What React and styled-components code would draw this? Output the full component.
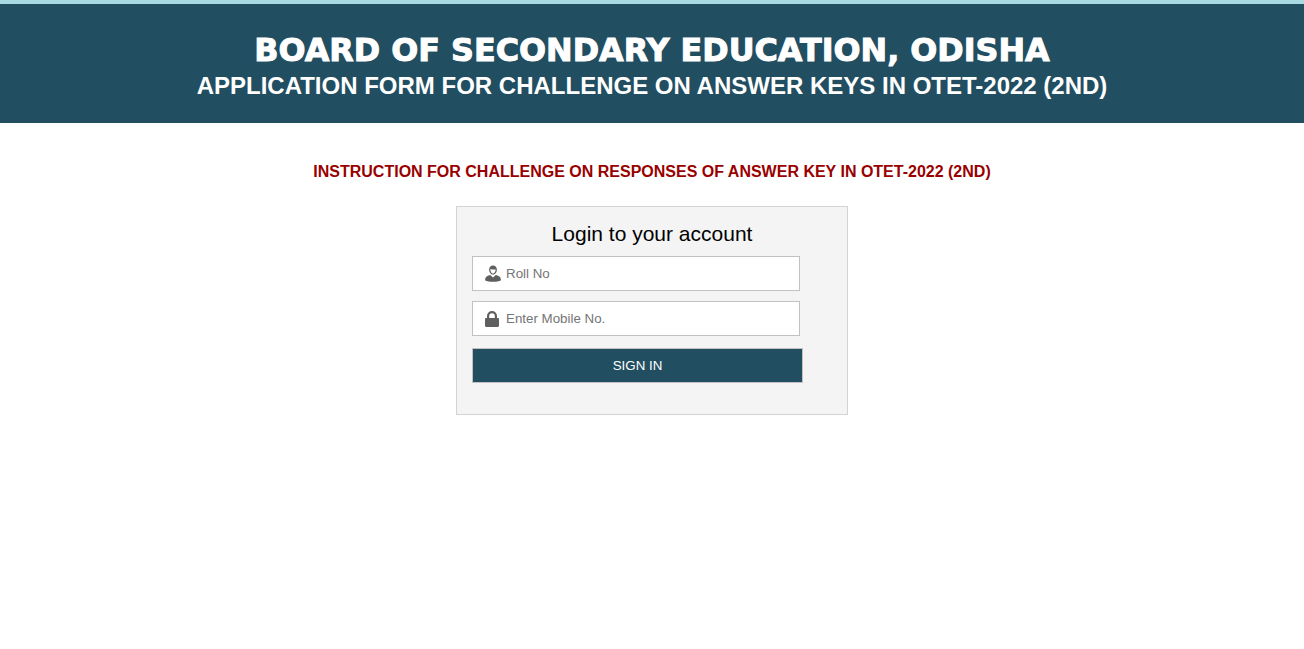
import React from "react"
import styled, { createGlobalStyle } from "styled-components"

const GlobalStyle = createGlobalStyle`
  html, body {
    margin: 0;
    padding: 0;
    background: #fff;
    font-family: "Liberation Sans", Arial, sans-serif;
  }
`

const Header = styled.header`
  height: 91px;
  padding-top: 28px;
  background: #224e61;
  border-top: 4px solid #a9d9e2;
  color: #fff;
  text-align: center;
`

const Title = styled.h1`
  margin: 0;
  font-family: "DejaVu Sans", sans-serif;
  font-size: 31.8px;
  line-height: 36px;
  font-weight: 700;
  -webkit-text-stroke: 1px #fff;
`

const SubTitle = styled.h2`
  margin: 0;
  font-size: 24px;
  line-height: 36px;
  font-weight: 700;
`

const Instruction = styled.p`
  margin: 40px 0 0;
  text-align: center;
  color: #990000;
  font-size: 16px;
  line-height: 18px;
  font-weight: 700;
`

const Card = styled.form`
  box-sizing: border-box;
  width: 392px;
  height: 209px;
  margin: 25px auto 0;
  padding: 15px;
  background: #f4f4f4;
  border: 1px solid #d3d3d3;
`

const CardTitle = styled.h3`
  margin: 0 0 10px;
  text-align: center;
  font-size: 21px;
  line-height: 24px;
  font-weight: 400;
  color: #000;
`

const Field = styled.label`
  box-sizing: border-box;
  display: flex;
  align-items: center;
  gap: 5px;
  width: 328px;
  height: 35px;
  margin-bottom: 10px;
  padding-left: 12px;
  background: #fff;
  border: 1px solid #c4bfc0;
`

const FieldInput = styled.input`
  flex: 1;
  min-width: 0;
  border: 0;
  outline: 0;
  padding: 0;
  background: transparent;
  font-family: "Liberation Sans", Arial, sans-serif;
  font-size: 13.33px;
  color: #333;
  &::placeholder {
    color: #757575;
    opacity: 1;
  }
`

const SignIn = styled.button`
  display: block;
  box-sizing: border-box;
  width: 331px;
  height: 35px;
  margin-top: 12px;
  padding: 0;
  background: #224e61;
  border: 1px solid #c4bfc0;
  color: #fff;
  font-family: "Liberation Sans", Arial, sans-serif;
  font-size: 13.33px;
`

const UserIcon = () => (
  <svg width="16" height="17" viewBox="0 0 16 17" fill="#5f5f5f">
    <path
      fillRule="evenodd"
      d="M8 0.5c-2.400 0-3.900 1.700-3.900 4 0 2.600 1.700 5.200 3.900 5.200s3.900-2.600 3.900-5.200c0-2.300-1.500-4-3.900-4zM5.300 4c1.500.5 3.700.7 5.400.5-.1 1.900-1.300 4.200-2.700 4.200S5.300 6.100 5.300 4z"
    />
    <path d="M5.200 9.900C2.800 10.500.9 11.400.4 13.200L0 15.300c1.800 1 4.900 1.500 8 1.500s6.200-.5 8-1.500l-.4-2.100c-.5-1.800-2.400-2.700-4.800-3.300L8 12.500z" />
  </svg>
)

const LockIcon = () => (
  <svg width="16" height="16" viewBox="0 0 16 16" fill="#5f5f5f">
    <path
      fillRule="evenodd"
      d="M2 7V5a5 5 0 0 1 10 0v2h.8c.7 0 1.200.5 1.200 1.200v6.600c0 .7-.5 1.200-1.200 1.200H1.200C.5 16 0 15.500 0 14.800V8.200C0 7.500.5 7 1.200 7zm2.200 0h5.600V5a2.800 2.800 0 0 0-5.600 0z"
    />
  </svg>
)

export default function App() {
  return (
    <>
      <GlobalStyle />
      <Header>
        <Title>BOARD OF SECONDARY EDUCATION, ODISHA</Title>
        <SubTitle>APPLICATION FORM FOR CHALLENGE ON ANSWER KEYS IN OTET-2022 (2ND)</SubTitle>
      </Header>
      <Instruction>INSTRUCTION FOR CHALLENGE ON RESPONSES OF ANSWER KEY IN OTET-2022 (2ND)</Instruction>
      <Card onSubmit={(e) => e.preventDefault()}>
        <CardTitle>Login to your account</CardTitle>
        <Field>
          <UserIcon />
          <FieldInput placeholder="Roll No" />
        </Field>
        <Field>
          <LockIcon />
          <FieldInput placeholder="Enter Mobile No." />
        </Field>
        <SignIn type="submit">SIGN IN</SignIn>
      </Card>
    </>
  )
}
